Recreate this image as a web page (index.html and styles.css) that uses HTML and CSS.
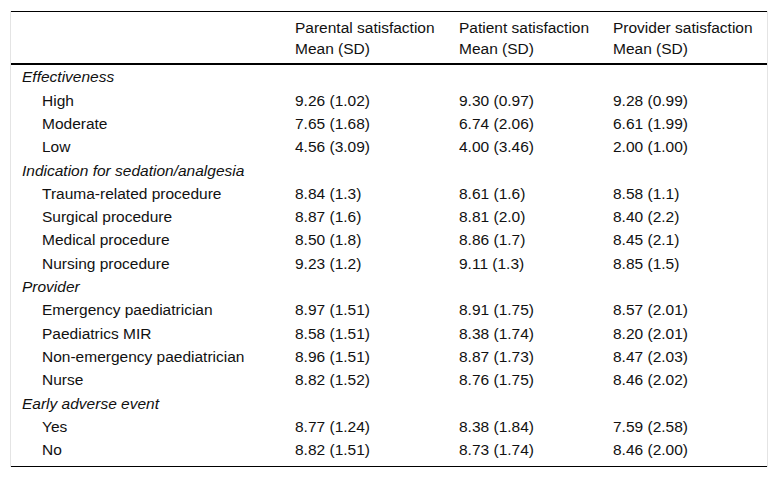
FILE: index.html
```html
<!DOCTYPE html>
<html>
<head>
<meta charset="utf-8">
<link rel="stylesheet" href="styles.css">
</head>
<body>
<div class="frame">
<table class="tbl">
<colgroup>
<col class="c1"><col class="c2"><col class="c3"><col class="c4">
</colgroup>
<thead>
<tr><th></th><th>Parental satisfaction<br>Mean (SD)</th><th>Patient satisfaction<br>Mean (SD)</th><th>Provider satisfaction<br>Mean (SD)</th></tr>
</thead>
<tbody>
<tr class="grp"><td><em>Effectiveness</em></td><td></td><td></td><td></td></tr>
<tr><td class="ind">High</td><td>9.26 (1.02)</td><td>9.30 (0.97)</td><td>9.28 (0.99)</td></tr>
<tr><td class="ind">Moderate</td><td>7.65 (1.68)</td><td>6.74 (2.06)</td><td>6.61 (1.99)</td></tr>
<tr><td class="ind">Low</td><td>4.56 (3.09)</td><td>4.00 (3.46)</td><td>2.00 (1.00)</td></tr>
<tr class="grp"><td><em>Indication for sedation/analgesia</em></td><td></td><td></td><td></td></tr>
<tr><td class="ind">Trauma-related procedure</td><td>8.84 (1.3)</td><td>8.61 (1.6)</td><td>8.58 (1.1)</td></tr>
<tr><td class="ind">Surgical procedure</td><td>8.87 (1.6)</td><td>8.81 (2.0)</td><td>8.40 (2.2)</td></tr>
<tr><td class="ind">Medical procedure</td><td>8.50 (1.8)</td><td>8.86 (1.7)</td><td>8.45 (2.1)</td></tr>
<tr><td class="ind">Nursing procedure</td><td>9.23 (1.2)</td><td>9.11 (1.3)</td><td>8.85 (1.5)</td></tr>
<tr class="grp"><td><em>Provider</em></td><td></td><td></td><td></td></tr>
<tr><td class="ind">Emergency paediatrician</td><td>8.97 (1.51)</td><td>8.91 (1.75)</td><td>8.57 (2.01)</td></tr>
<tr><td class="ind">Paediatrics MIR</td><td>8.58 (1.51)</td><td>8.38 (1.74)</td><td>8.20 (2.01)</td></tr>
<tr><td class="ind">Non-emergency paediatrician</td><td>8.96 (1.51)</td><td>8.87 (1.73)</td><td>8.47 (2.03)</td></tr>
<tr><td class="ind">Nurse</td><td>8.82 (1.52)</td><td>8.76 (1.75)</td><td>8.46 (2.02)</td></tr>
<tr class="grp"><td><em>Early adverse event</em></td><td></td><td></td><td></td></tr>
<tr><td class="ind">Yes</td><td>8.77 (1.24)</td><td>8.38 (1.84)</td><td>7.59 (2.58)</td></tr>
<tr class="last"><td class="ind">No</td><td>8.82 (1.51)</td><td>8.73 (1.74)</td><td>8.46 (2.00)</td></tr>
</tbody>
</table>
</div>
</body>
</html>
```
FILE: styles.css
```css
html, body {
  margin: 0;
  padding: 0;
  background: #fff;
}
body {
  font-family: "Liberation Sans", Arial, sans-serif;
  font-size: 15.5px;
  color: #111;
}
.frame {
  margin: 11px 0 0 10px;
  width: 756px;
  border-left: 1px solid #e4e4e4;
  border-right: 1px solid #e4e4e4;
}
.tbl {
  width: 756px;
  border-collapse: collapse;
  table-layout: fixed;
  border-top: 1px solid #000;
  border-bottom: 1px solid #000;
}
.c1 { width: 273px; }
.c2 { width: 164px; }
.c3 { width: 154px; }
.c4 { width: 165px; }
.tbl th {
  font-weight: normal;
  text-align: left;
  vertical-align: top;
  line-height: 21px;
  padding: 5px 11px 4px;
  border-bottom: 2px solid #000;
}
.tbl td {
  padding: 2px 11px;
  line-height: 19.3px;
  text-align: left;
  vertical-align: top;
}
.tbl td.ind {
  padding-left: 31px;
}
.tbl tbody tr:first-child td {
  padding-top: 2.4px;
}
.tbl tr.last td {
  padding-bottom: 7px;
}
```
